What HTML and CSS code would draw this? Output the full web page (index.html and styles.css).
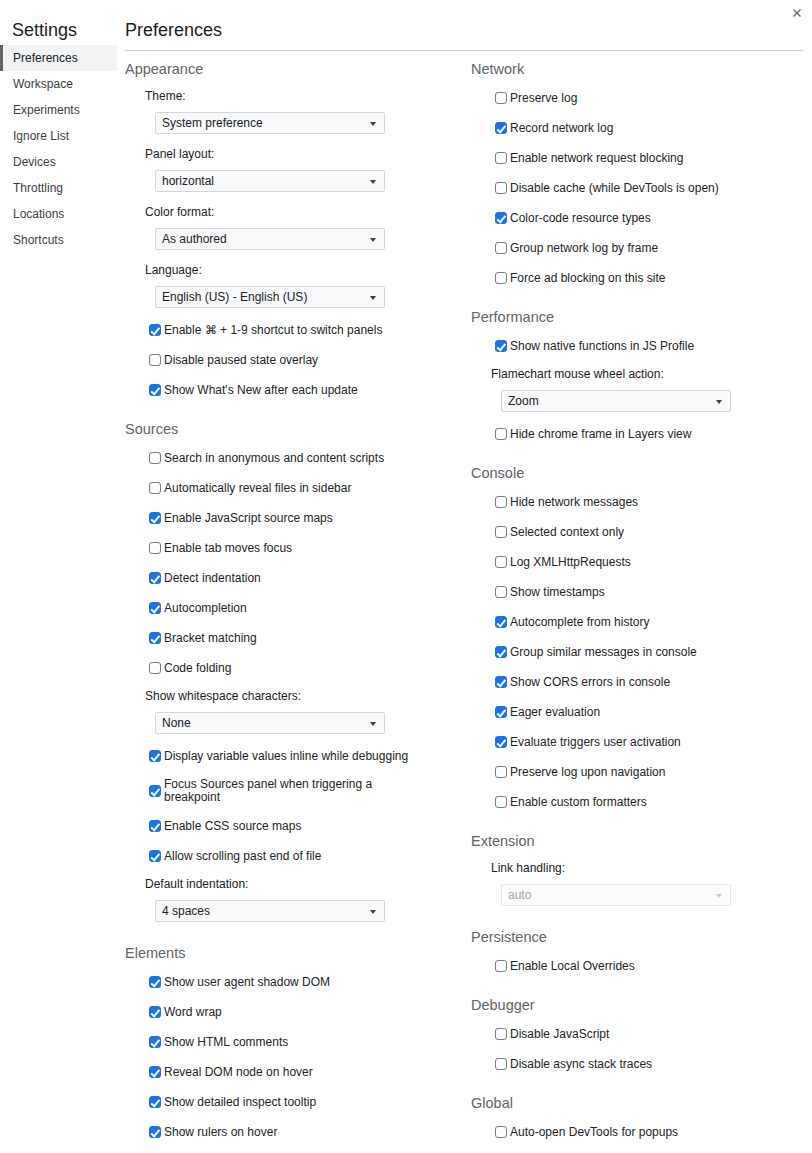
FILE: index.html
```html
<!DOCTYPE html>
<html lang="en">
<head>
<meta charset="utf-8">
<title>Settings</title>
<link rel="stylesheet" href="styles.css">
</head>
<body>
<div class="window">
  <nav class="sidebar">
    <h1 class="side-title">Settings</h1>
    <ul class="tabs">
      <li class="tab selected">Preferences</li>
      <li class="tab">Workspace</li>
      <li class="tab">Experiments</li>
      <li class="tab">Ignore List</li>
      <li class="tab">Devices</li>
      <li class="tab">Throttling</li>
      <li class="tab">Locations</li>
      <li class="tab">Shortcuts</li>
    </ul>
  </nav>
  <main class="main">
    <h2 class="main-title">Preferences</h2>
    <div class="columns">
      <div class="col col-left">
        <section class="block">
          <h3 class="block-title">Appearance</h3>
          <div class="field-label">Theme:</div>
          <div class="select"><span>System preference</span><i class="arrow"></i></div>
          <div class="field-label">Panel layout:</div>
          <div class="select"><span>horizontal</span><i class="arrow"></i></div>
          <div class="field-label">Color format:</div>
          <div class="select"><span>As authored</span><i class="arrow"></i></div>
          <div class="field-label">Language:</div>
          <div class="select"><span>English (US) - English (US)</span><i class="arrow"></i></div>
          <label class="cb"><input type="checkbox" checked><span>Enable ⌘ + 1-9 shortcut to switch panels</span></label>
          <label class="cb"><input type="checkbox"><span>Disable paused state overlay</span></label>
          <label class="cb"><input type="checkbox" checked><span>Show What's New after each update</span></label>
        </section>
        <section class="block">
          <h3 class="block-title">Sources</h3>
          <label class="cb"><input type="checkbox"><span>Search in anonymous and content scripts</span></label>
          <label class="cb"><input type="checkbox"><span>Automatically reveal files in sidebar</span></label>
          <label class="cb"><input type="checkbox" checked><span>Enable JavaScript source maps</span></label>
          <label class="cb"><input type="checkbox"><span>Enable tab moves focus</span></label>
          <label class="cb"><input type="checkbox" checked><span>Detect indentation</span></label>
          <label class="cb"><input type="checkbox" checked><span>Autocompletion</span></label>
          <label class="cb"><input type="checkbox" checked><span>Bracket matching</span></label>
          <label class="cb"><input type="checkbox"><span>Code folding</span></label>
          <div class="field-label">Show whitespace characters:</div>
          <div class="select"><span>None</span><i class="arrow"></i></div>
          <label class="cb"><input type="checkbox" checked><span>Display variable values inline while debugging</span></label>
          <label class="cb"><input type="checkbox" checked><span>Focus Sources panel when triggering a breakpoint</span></label>
          <label class="cb"><input type="checkbox" checked><span>Enable CSS source maps</span></label>
          <label class="cb"><input type="checkbox" checked><span>Allow scrolling past end of file</span></label>
          <div class="field-label">Default indentation:</div>
          <div class="select"><span>4 spaces</span><i class="arrow"></i></div>
        </section>
        <section class="block">
          <h3 class="block-title">Elements</h3>
          <label class="cb"><input type="checkbox" checked><span>Show user agent shadow DOM</span></label>
          <label class="cb"><input type="checkbox" checked><span>Word wrap</span></label>
          <label class="cb"><input type="checkbox" checked><span>Show HTML comments</span></label>
          <label class="cb"><input type="checkbox" checked><span>Reveal DOM node on hover</span></label>
          <label class="cb"><input type="checkbox" checked><span>Show detailed inspect tooltip</span></label>
          <label class="cb"><input type="checkbox" checked><span>Show rulers on hover</span></label>
        </section>
      </div>
      <div class="col col-right">
        <section class="block">
          <h3 class="block-title">Network</h3>
          <label class="cb"><input type="checkbox"><span>Preserve log</span></label>
          <label class="cb"><input type="checkbox" checked><span>Record network log</span></label>
          <label class="cb"><input type="checkbox"><span>Enable network request blocking</span></label>
          <label class="cb"><input type="checkbox"><span>Disable cache (while DevTools is open)</span></label>
          <label class="cb"><input type="checkbox" checked><span>Color-code resource types</span></label>
          <label class="cb"><input type="checkbox"><span>Group network log by frame</span></label>
          <label class="cb"><input type="checkbox"><span>Force ad blocking on this site</span></label>
        </section>
        <section class="block">
          <h3 class="block-title">Performance</h3>
          <label class="cb"><input type="checkbox" checked><span>Show native functions in JS Profile</span></label>
          <div class="field-label">Flamechart mouse wheel action:</div>
          <div class="select"><span>Zoom</span><i class="arrow"></i></div>
          <label class="cb"><input type="checkbox"><span>Hide chrome frame in Layers view</span></label>
        </section>
        <section class="block">
          <h3 class="block-title">Console</h3>
          <label class="cb"><input type="checkbox"><span>Hide network messages</span></label>
          <label class="cb"><input type="checkbox"><span>Selected context only</span></label>
          <label class="cb"><input type="checkbox"><span>Log XMLHttpRequests</span></label>
          <label class="cb"><input type="checkbox"><span>Show timestamps</span></label>
          <label class="cb"><input type="checkbox" checked><span>Autocomplete from history</span></label>
          <label class="cb"><input type="checkbox" checked><span>Group similar messages in console</span></label>
          <label class="cb"><input type="checkbox" checked><span>Show CORS errors in console</span></label>
          <label class="cb"><input type="checkbox" checked><span>Eager evaluation</span></label>
          <label class="cb"><input type="checkbox" checked><span>Evaluate triggers user activation</span></label>
          <label class="cb"><input type="checkbox"><span>Preserve log upon navigation</span></label>
          <label class="cb"><input type="checkbox"><span>Enable custom formatters</span></label>
        </section>
        <section class="block">
          <h3 class="block-title">Extension</h3>
          <div class="field-label">Link handling:</div>
          <div class="select disabled"><span>auto</span><i class="arrow"></i></div>
        </section>
        <section class="block">
          <h3 class="block-title">Persistence</h3>
          <label class="cb"><input type="checkbox"><span>Enable Local Overrides</span></label>
        </section>
        <section class="block">
          <h3 class="block-title">Debugger</h3>
          <label class="cb"><input type="checkbox"><span>Disable JavaScript</span></label>
          <label class="cb"><input type="checkbox"><span>Disable async stack traces</span></label>
        </section>
        <section class="block">
          <h3 class="block-title">Global</h3>
          <label class="cb"><input type="checkbox"><span>Auto-open DevTools for popups</span></label>
        </section>
      </div>
    </div>
  </main>
  <button class="close" aria-label="Close">
    <svg width="8" height="8" viewBox="0 0 8 8"><path d="M0.5 0.5L7.5 7.5M7.5 0.5L0.5 7.5" stroke="#5f6368" stroke-width="1.3" fill="none"/></svg>
  </button>
</div>
</body>
</html>
```

FILE: styles.css
```css
* { box-sizing: border-box; }
html, body {
  margin: 0;
  padding: 0;
  background: #ffffff;
}
body {
  font-family: "Liberation Sans", Arial, sans-serif;
  font-size: 12px;
  color: #222426;
}
.window {
  position: relative;
  display: flex;
  min-height: 1153px;
}
.sidebar {
  width: 117px;
  flex: none;
  padding-top: 18px;
  margin-right: 8px;
}
.side-title {
  margin: 0 0 3px 12px;
  font-size: 18px;
  line-height: 24px;
  font-weight: normal;
  color: #202124;
}
.tabs {
  list-style: none;
  margin: 0;
  padding: 0;
}
.tab {
  height: 26px;
  line-height: 26px;
  padding-left: 13px;
  font-size: 12px;
  color: #3c4043;
  white-space: nowrap;
}
.tab.selected {
  background: #f1f3f4;
  border-left: 3px solid #5f6368;
  padding-left: 10px;
  color: #202124;
}
.main {
  flex: 1;
  padding-right: 9px;
}
.main-title {
  margin: 0;
  padding-top: 18px;
  padding-bottom: 8px;
  font-size: 18px;
  line-height: 24px;
  font-weight: normal;
  color: #202124;
  border-bottom: 1px solid #cbcdd1;
}
.columns {
  display: grid;
  grid-template-columns: 300px 1fr;
  column-gap: 46px;
}
.block {
  display: flow-root;
}
.block-title {
  margin: 14px 0 0 0;
  padding-bottom: 4px;
  font-size: 14.5px;
  line-height: 20px;
  font-weight: normal;
  color: #5f6368;
}
.block:first-child .block-title {
  margin-top: 8px;
}
.field-label {
  padding: 5px 0 8px 20px;
  line-height: 16px;
  color: #202124;
}
.select {
  position: relative;
  display: flex;
  align-items: center;
  width: 230px;
  height: 22px;
  margin: 0 0 7px 30px;
  padding: 0 6px;
  border: 1px solid #d4d6d9;
  border-radius: 2px;
  background: #f8f9fa;
  color: #202124;
}
.select .arrow {
  position: absolute;
  right: 8px;
  top: 9px;
  width: 0;
  height: 0;
  border-left: 3.5px solid transparent;
  border-right: 3.5px solid transparent;
  border-top: 4px solid #3c4043;
}
.select.disabled {
  color: #a8a8a8;
  border-color: #e6e7e9;
  background: #fbfbfb;
}
.select.disabled .arrow {
  border-top-color: #c4c6c8;
}
.cb {
  display: flex;
  align-items: center;
  min-height: 30px;
  padding: 7px 0 7px 24px;
}
.cb span {
  line-height: 13px;
}
.cb input {
  -webkit-appearance: none;
  appearance: none;
  position: relative;
  flex: none;
  width: 12px;
  height: 12px;
  margin: 0 3px 0 0;
  border: 1px solid #7a7a7a;
  border-radius: 3px;
  background: #ffffff;
}
.cb input:checked {
  background: #1a73e8;
  border-color: #1a73e8;
}
.cb input:checked::after {
  content: "";
  position: absolute;
  left: 3px;
  top: 0.5px;
  width: 3px;
  height: 6.5px;
  border-right: 2px solid #ffffff;
  border-bottom: 2px solid #ffffff;
  transform: rotate(40deg);
}
.close {
  position: absolute;
  top: 9px;
  right: 11px;
  width: 8px;
  height: 8px;
  padding: 0;
  border: 0;
  background: transparent;
  line-height: 0;
}
```
